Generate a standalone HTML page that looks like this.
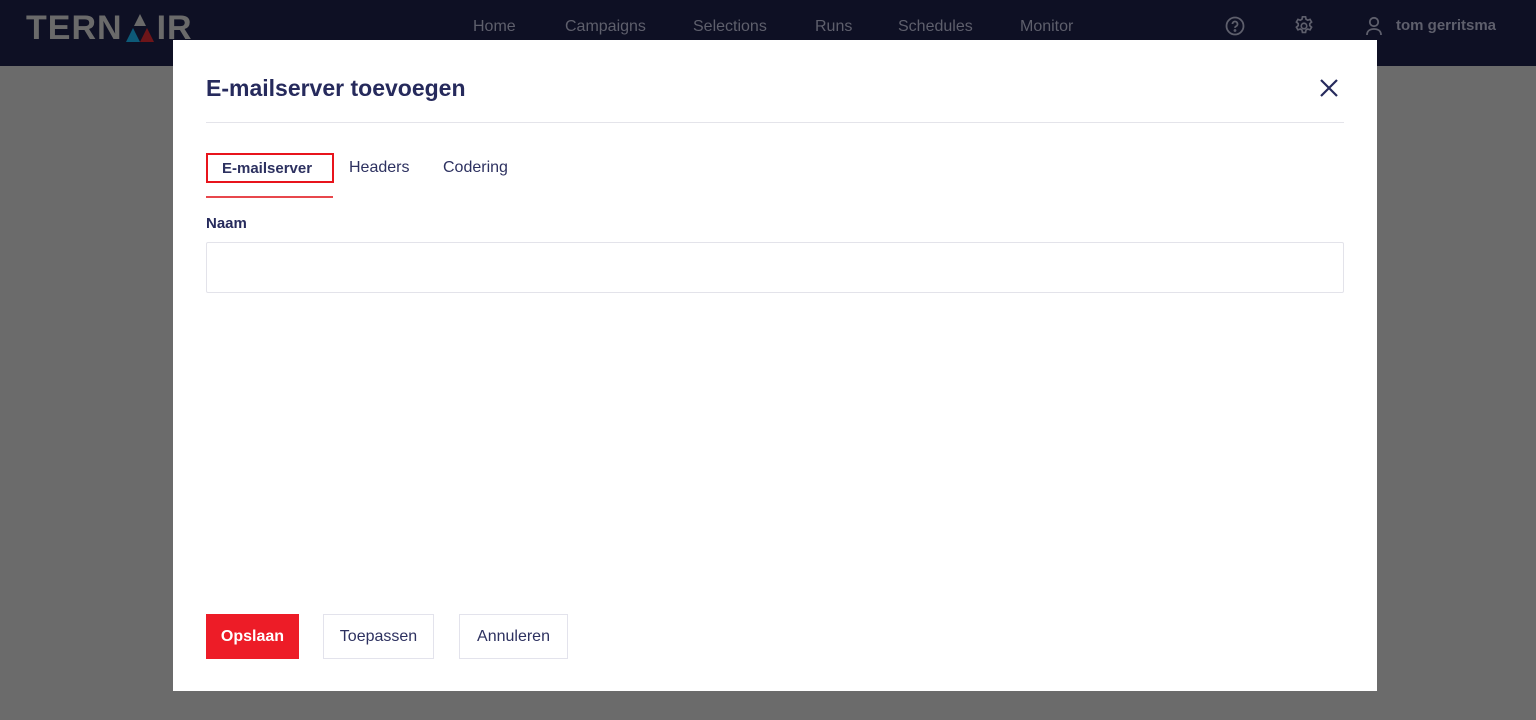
<!DOCTYPE html>
<html><head><style>
*{margin:0;padding:0;box-sizing:border-box}
body{width:1536px;height:720px;background:#6b6b6b;font-family:"Liberation Sans",sans-serif;position:relative;overflow:hidden}
.hdr{position:absolute;left:0;top:0;width:1536px;height:66px;background:#0e1024}
.logo{position:absolute;left:26px;top:9px;font-size:34px;font-weight:bold;color:#6a6a6a;letter-spacing:1px;white-space:nowrap}
.nav{position:absolute;top:18px;font-size:16px;color:#5e5f6c}
.modal{position:absolute;left:173px;top:40px;width:1204px;height:651px;background:#fff}
.title{position:absolute;left:33px;top:35px;font-size:23px;font-weight:bold;color:#262a5c}
.hr{position:absolute;left:33px;top:82px;width:1138px;height:1px;background:#e4e4ea}
.tab{position:absolute;top:119px;font-size:16px;color:#2d3160}
.btn{position:absolute;top:574px;height:45px;font-size:16px;display:flex;align-items:center;justify-content:center;color:#2d3160;border:1px solid #e3e3ec}
</style></head><body>
<div class="hdr">
<div class="logo">TERN<span style="display:inline-block;width:34px;height:28px;position:relative;vertical-align:-2px"><svg width="34" height="30" viewBox="0 0 34 30" style="position:absolute;left:0;top:0"><polygon points="17,1 23,13 11,13" fill="#6a6a6a"/><polygon points="10,15 17,29 3,29" fill="#0d5a78"/><polygon points="24,15 31,29 17,29" fill="#6d1519"/></svg></span>IR</div>
<div class="nav" style="left:473px">Home</div>
<div class="nav" style="left:565px">Campaigns</div>
<div class="nav" style="left:693px">Selections</div>
<div class="nav" style="left:815px">Runs</div>
<div class="nav" style="left:898px">Schedules</div>
<div class="nav" style="left:1020px">Monitor</div>
<svg style="position:absolute;left:1225px;top:16px" width="20" height="20" viewBox="0 0 20 20" fill="none" stroke="#5e5f6c" stroke-width="1.8"><circle cx="10" cy="10" r="8.5"/><path d="M7.5 8a2.5 2.5 0 1 1 3.5 2.3c-.7.4-1 .8-1 1.6"/><circle cx="10" cy="14.5" r=".5" fill="#5e5f6c"/></svg>
<svg style="position:absolute;left:1293px;top:15px" width="22" height="22" viewBox="0 0 24 24" fill="none" stroke="#5e5f6c" stroke-width="1.8"><circle cx="12" cy="12" r="3"/><path d="M10.3 2h3.4l.5 2.6 1.9 1.1 2.5-.9 1.7 2.9-2 1.7v2.2l2 1.7-1.7 2.9-2.5-.9-1.9 1.1-.5 2.6h-3.4l-.5-2.6-1.9-1.1-2.5.9-1.7-2.9 2-1.7V9.4l-2-1.7 1.7-2.9 2.5.9 1.9-1.1z"/></svg>
<svg style="position:absolute;left:1366px;top:16px" width="16" height="20" viewBox="0 0 16 20" fill="none" stroke="#5e5f6c" stroke-width="1.8"><circle cx="8" cy="6" r="4.2"/><path d="M1 19c0-4 3-6 7-6s7 2 7 6"/></svg>
<div class="nav" style="left:1396px;top:17px;font-weight:bold;font-size:15px">tom gerritsma</div>
</div>
<div class="modal">
<div class="title">E-mailserver toevoegen</div>
<svg style="position:absolute;left:1146px;top:38px" width="20" height="20" viewBox="0 0 20 20" stroke="#262a5c" stroke-width="2.2"><path d="M2 2L18 18M18 2L2 18"/></svg>
<div class="hr"></div>
<div style="position:absolute;left:33px;top:113px;width:128px;height:30px;border:2px solid #e8141c"></div>
<div class="tab" style="left:49px;font-weight:bold;font-size:15px;top:120px">E-mailserver</div>
<div class="tab" style="left:176px">Headers</div>
<div class="tab" style="left:270px">Codering</div>
<div style="position:absolute;left:33px;top:156px;width:127px;height:2px;background:#e8474c"></div>
<div style="position:absolute;left:33px;top:175px;font-size:15px;font-weight:bold;color:#262a5c">Naam</div>
<div style="position:absolute;left:33px;top:202px;width:1138px;height:51px;border:1px solid #e3e3ea;border-radius:2px"></div>
<div class="btn" style="left:33px;width:93px;background:#ed1c27;border-color:#ed1c27;color:#fff;font-weight:bold">Opslaan</div>
<div class="btn" style="left:150px;width:111px">Toepassen</div>
<div class="btn" style="left:286px;width:109px">Annuleren</div>
</div>
</body></html>
